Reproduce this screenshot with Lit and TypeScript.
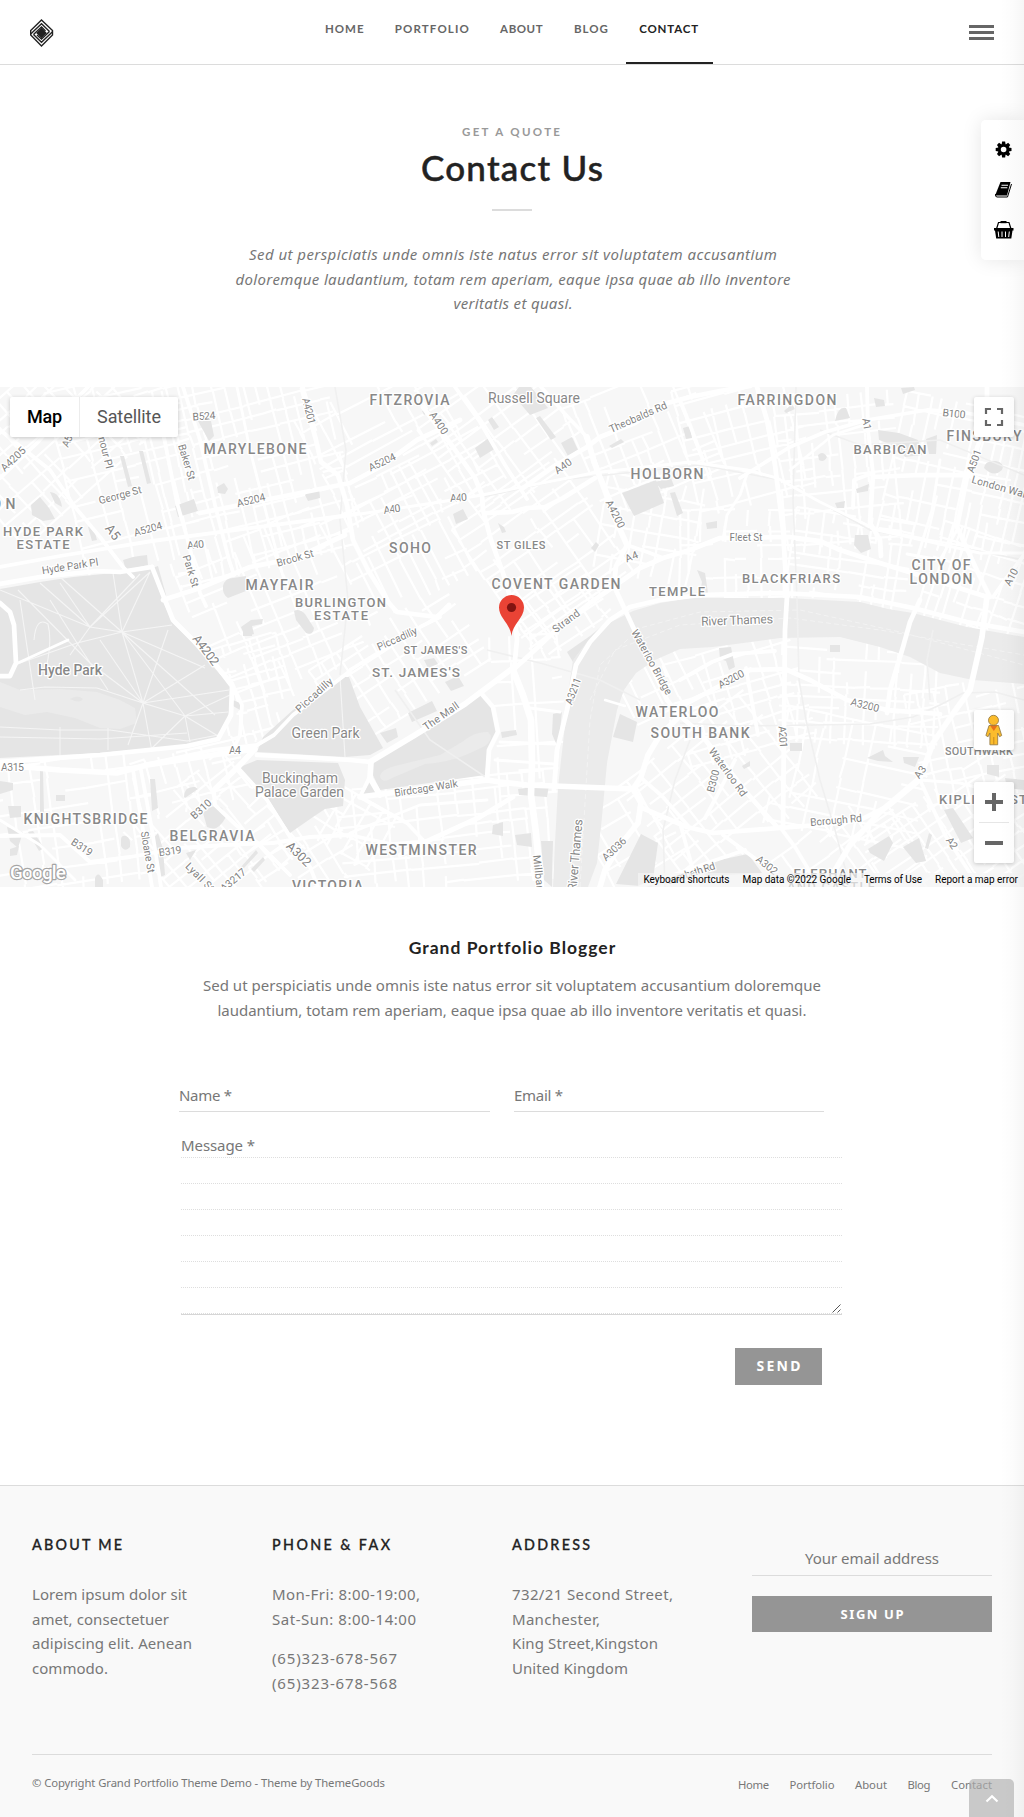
import { LitElement, html, svg, css } from "lit";
import { customElement, property } from "lit/decorators.js";

/** One line of text whose tracking is adjusted so that it spans a given width. */
@customElement("fit-line")
export class FitLine extends LitElement {
  @property({ type: Number }) w = 0;

  static styles = css`
    :host { display: inline-block; white-space: nowrap; text-align: left; }
    .run { display: inline-block; }
  `;

  firstUpdated() {
    const run = this.renderRoot.querySelector(".run") as HTMLElement;
    const count = (this.textContent || "").trim().length;
    run.style.letterSpacing = "0px";
    const natural = run.getBoundingClientRect().width;
    if (this.w > 0 && count > 1 && natural > 0) {
      const gap = (this.w - natural) / (count - 1);
      run.style.letterSpacing = `${gap}px`;
      run.style.marginRight = `${-gap}px`;
    }
  }

  render() {
    return html`<span class="run"><slot></slot></span>`;
  }
}

type Label = [string, number, number, number, number, number, string?];

/* text, centre x, centre y, width, size, rotation, style */
const LABELS: Label[] = [
  ["FITZROVIA", 409.5, 400, 80, 14, 0, "area"],
  ["Russell Square", 534, 398, 92, 14, 0, "park"],
  ["FARRINGDON", 787, 400, 99, 14, 0, "area"],
  ["MARYLEBONE", 255, 449, 103, 14, 0, "area"],
  ["BARBICAN", 890, 449, 73, 13, 0, "area"],
  ["FINSBURY", 984, 436, 75, 14, 0, "area"],
  ["HOLBORN", 667, 474, 73, 14, 0, "area"],
  ["ON", 3.5, 504, 24, 14, 0, "area"],
  ["HYDE PARK", 43, 531, 80, 13, 0, "area"],
  ["ESTATE", 43, 544, 53, 13, 0, "area"],
  ["SOHO", 410, 548, 42, 14, 0, "area"],
  ["ST GILES", 521, 545, 49, 11, 0, "area"],
  ["COVENT GARDEN", 556, 584, 129, 14, 0, "area"],
  ["TEMPLE", 677, 591, 56, 13, 0, "area"],
  ["BLACKFRIARS", 791, 578, 98, 13, 0, "area"],
  ["CITY OF", 941, 565, 59, 14, 0, "area"],
  ["LONDON", 941, 579, 63, 14, 0, "area"],
  ["MAYFAIR", 279.5, 585, 68, 14, 0, "area"],
  ["BURLINGTON", 340.5, 602, 91, 13, 0, "area"],
  ["ESTATE", 341, 615, 54, 13, 0, "area"],
  ["Hyde Park", 70, 670, 64, 14, 0, "area"],
  ["ST JAMES'S", 435.5, 650, 64, 11, 0, "area"],
  ["ST. JAMES'S", 416, 672, 88, 13.5, 0, "area"],
  ["Green Park", 325.5, 733, 68, 14, 0, "park"],
  ["Buckingham", 300, 778, 76, 14, 0, "park"],
  ["Palace Garden", 299.5, 792, 89, 14, 0, "park"],
  ["KNIGHTSBRIDGE", 85.5, 819, 124, 14, 0, "area"],
  ["BELGRAVIA", 212, 836, 85, 14, 0, "area"],
  ["WESTMINSTER", 421, 850, 111, 14, 0, "area"],
  ["VICTORIA", 327.5, 886, 71, 14, 0, "area"],
  ["WATERLOO", 677, 712, 83, 14, 0, "area"],
  ["SOUTH BANK", 700, 733, 99, 14, 0, "area"],
  ["SOUTHWARK", 979, 751, 68, 11, 0, "area"],
  ["KIPLING EST", 983, 799, 88, 13, 0, "area"],
  ["ELEPHANT", 830, 873, 73, 13, 0, "area"],
  ["AND CASTLE", 831, 886, 88, 13, 0, "area"],
  ["B524", 204, 416, 23, 10.5, -4],
  ["A4201", 309, 411, 27, 10.5, 75],
  ["Baker St", 187, 462, 37, 10.5, 73],
  ["A4205", 13, 459, 30, 10.5, -44],
  ["A5", 67, 441, 12, 10.5, -66],
  ["Seymour Pl", 103.5, 443, 52, 10.5, 76],
  ["George St", 120, 495, 44, 10.5, -15],
  ["A5204", 251, 500, 29, 10.5, -14],
  ["A5204", 148, 529, 29, 10.5, -16],
  ["A5", 113, 532, 16, 13, 52],
  ["A40", 195.5, 544.5, 17, 10.5, -6],
  ["Park St", 191, 571, 33, 10.5, 73],
  ["Hyde Park Pl", 70, 566, 57, 10.5, -9],
  ["Brook St", 295, 558, 38, 10.5, -16],
  ["A400", 439, 423, 25, 10.5, 56],
  ["Theobalds Rd", 638, 417, 62, 10.5, -24],
  ["A5204", 382, 462, 29, 10.5, -25],
  ["A40", 563, 466, 19, 10.5, -36],
  ["A40", 392, 509, 17, 10.5, -8],
  ["A40", 458.5, 497.5, 17, 10.5, -4],
  ["A4200", 615.5, 514, 30, 10.5, 63],
  ["A4", 631.5, 556.5, 13, 10.5, -22],
  ["Strand", 566, 621, 31, 10.5, -37],
  ["Piccadilly", 397, 638.5, 43, 10.5, -24],
  ["Piccadilly", 314, 695, 46, 10.5, -42],
  ["A1", 867, 424, 12, 10.5, 80],
  ["B100", 954, 413.5, 23, 10.5, 6],
  ["A501", 974, 461, 24, 10.5, -70],
  ["London Wall", 1000, 487, 58, 10.5, 16],
  ["Fleet St", 746, 537, 33, 10.5, 0],
  ["A10", 1011, 577, 18, 10.5, -62],
  ["River Thames", 737, 620, 72, 12.5, -2, "park"],
  ["A4202", 206, 650, 35, 12.5, 53],
  ["A4", 235, 750, 12, 10.5, 0],
  ["A315", 12.5, 767, 23, 10.5, 0],
  ["B310", 201, 809, 24, 10.5, -42],
  ["B319", 82, 847, 23, 10.5, 33],
  ["B319", 170, 851, 23, 10.5, -8],
  ["Sloane St", 148, 852, 42, 10.5, 80],
  ["Lyall St", 200, 877, 36, 10.5, 45],
  ["A3217", 233, 880, 30, 10.5, -40],
  ["A302", 299, 854, 29, 12.5, 44],
  ["The Mall", 441, 716, 41, 10.5, -35],
  ["Birdcage Walk", 426, 788, 64, 10.5, -9],
  ["A3211", 573, 691, 28, 10.5, -70],
  ["Waterloo Bridge", 652, 662, 73, 10.5, 61],
  ["Millbank", 539, 876, 42, 10.5, 84],
  ["River Thames", 575, 855, 72, 12.5, -85, "park"],
  ["A3036", 614, 849, 29, 10.5, -43],
  ["A3200", 731, 679, 28, 10.5, -28],
  ["A3200", 865, 705, 29, 10.5, 14],
  ["A201", 783, 737, 22, 10.5, 86],
  ["Waterloo Rd", 728, 772, 57, 10.5, 54],
  ["B300", 713, 781, 23, 10.5, -75],
  ["A3", 920, 772, 13, 10.5, -55],
  ["Borough Rd", 836, 820, 52, 10.5, -5],
  ["A2", 952, 843, 12, 10.5, 55],
  ["A302", 767, 865, 24, 10.5, 38],
  ["Lambeth Rd", 691, 873, 50, 10.5, -18],
];

const GREENS = [
  "M0 589 L40 582 L73 577 L113 573 L152 568 L157 583 L163 602 L173 623 L190 640 L207 660 L230 685 L230 703 L228 718 L217 738 L187 745 L100 753 L0 758 Z",
  "M342 677 L349 677 L360 707 L383 748 L370 755 L345 757 L257 752 L263 737 L293 710 Z",
  "M240 767 L257 760 L338 763 L345 780 L343 806 L325 809 L313 817 L290 833 L267 797 Z",
  "M373 762 L425 728 L480 693 L492 707 L497 730 L488 750 L485 775 L380 790 L372 773 Z",
  "M370 782 L378 793 L363 794 Z",
  "M198 421 L211 421 L214 436 L209 441 Z",
  "M120 456 L124 456 L132 486 L128 487 Z", "M139 451 L143 451 L151 483 L147 484 Z",
  "M175 506 L194 499 L198 511 L178 517 Z",
  "M217 487 L224 483 L228 489 L225 494 L218 493 Z",
  "M88 527 L93 526 L97 540 L92 541 Z",
  "M31 505 L40 497 L49 508 L55 519 L43 521 L32 515 Z", "M50 492 Q60 493 62 507 L55 503 Z",
  "M123 560 L133 557 L139 556 L147 555 L148 565 L126 570 Z",
  "M223 586 Q225 578 233 578 L246 576 L246 591 L228 598 Q222 594 223 586 Z",
  "M294 611 Q299 608 305 614 L314 628 Q313 636 306 633 L296 620 Z",
  "M241 627 L251 620 L263 619 L262 624 L252 626 L254 634 L245 636 Z",
  "M152 568 L158 566 L166 595 L163 601 L156 580 Z",
  "M311 488 L319 488 L320 498 L308 501 L305 495 Z",
  "M475 448 L490 437 L496 448 L480 458 Z", "M453 514 L463 509 L468 519 L456 524 Z",
  "M422 411 L428 409 L430 412 L424 415 Z", "M488 420 L492 417 L499 427 L494 430 Z",
  "M519 387 L531 387 L548 408 L530 415 L513 395 Z",
  "M430 443 L436 439 L438 442 L432 446 Z", "M536 418 L540 416 L556 437 L551 440 Z",
  "M561 443 L572 437 L578 450 L568 456 Z", "M609 446 L621 439 L624 442 L612 448 Z",
  "M622 493 L656 480 L664 503 L634 516 Z", "M655 482 L671 478 L674 486 L661 489 Z",
  "M670 493 L675 492 L683 513 L677 516 Z", "M683 428 L690 426 L692 438 L686 439 Z",
  "M498 523 L504 527 L506 532 L502 533 Z", "M591 548 L596 542 L599 545 L595 552 Z",
  "M567 652 L590 636 L607 622 L600 632 L578 654 L573 662 Z",
  "M835 421 Q838 406 846 408 L850 418 Z",
  "M874 398 L884 400 L885 406 L876 407 Z", "M901 388 L914 387 L915 390 L903 394 Z",
  "M878 430 L899 433 L918 440 L922 455 L905 457 L898 447 L879 440 Z",
  "M926 439 L937 435 L936 454 L929 454 Z", "M984 468 Q985 460 996 461 Q1005 463 1002 470 Q994 478 984 468 Z",
  "M856 489 L869 484 L868 491 L857 493 Z", "M835 503 L845 501 L844 508 L837 508 Z",
  "M855 535 L868 535 L871 549 L861 553 L854 545 Z", "M706 523 L717 521 L717 528 L707 529 Z",
  "M697 570 L705 573 L708 593 L700 593 L702 582 Z",
  "M818 455 Q823 450 827 457 Q824 463 819 460 Z", "M784 411 L792 404 L795 409 L786 413 Z",
  "M719 648 L731 647 L735 667 L729 670 L726 661 L720 659 Z",
  "M830 645 L840 645 L840 652 L830 652 Z", "M867 758 L883 750 L885 756 L893 762 L878 761 Z",
  "M903 757 L919 757 L915 767 L904 763 Z", "M790 743 L802 743 L802 751 L790 751 Z",
  "M742 766 L750 761 L750 766 L744 769 Z", "M944 810 L953 808 L973 838 L961 843 Z",
  "M868 849 L889 836 L893 843 L884 861 L870 853 Z", "M903 847 L919 838 L926 861 L916 863 Z",
  "M710 862 L748 854 L762 873 L705 876 Z", "M925 848 L929 833 L932 835 L928 849 Z",
  "M641 834 L658 843 L652 887 L616 884 Z", "M620 714 L637 722 L633 742 L613 737 Z",
  "M553 714 L562 712 L558 748 L552 734 Z", "M541 841 L553 841 L552 887 L544 880 Z",
  "M518 789 L549 785 L547 797 L519 795 Z", "M515 835 L531 833 L532 847 L517 845 Z",
  "M493 825 L503 822 L503 836 L492 834 Z", "M445 682 L458 676 L464 686 L451 691 Z",
  "M408 713 L432 701 L437 711 L412 722 Z", "M380 733 L396 728 L398 737 L387 743 Z",
  "M424 660 L434 658 L438 664 L428 668 Z", "M501 732 L516 730 L517 735 L502 738 Z",
  "M203 813 Q214 802 222 808 L226 817 Q220 828 213 829 L207 827 Z",
  "M184 797 Q184 786 195 787 L198 789 L185 798 Z", "M150 779 L155 779 L158 808 L152 811 Z",
  "M121 840 Q121 835 126 836 Q131 838 130 847 Q125 853 121 846 Z",
  "M28 832 L33 831 L44 848 L39 851 Z", "M8 806 L21 806 L21 817 L10 818 Z",
  "M7 827 L23 832 L18 848 L10 841 Z", "M0 781 L13 783 L13 790 L0 794 Z",
  "M10 849 L19 846 L17 855 L10 856 Z", "M152 840 L158 833 L163 849 L165 875 L158 878 Z",
  "M186 853 L196 850 L190 860 Z", "M241 867 L256 850 L258 853 L244 868 Z",
  "M251 869 L263 857 L265 860 L254 872 Z", "M56 795 L65 795 L65 801 L56 801 Z",
  "M95 878 Q98 870 103 880 L103 887 L95 887 Z", "M233 700 L240 703 L240 710 L233 706 Z",
  "M987 765 L999 765 L999 777 L987 774 Z", "M1005 778 L1024 780 L1024 790 L1007 788 Z",
  "M243 630 L252 630 L252 636 L243 636 Z", "M40 771 L43 771 L44 813 L40 813 Z",
];

const RIVER =
  "M553 887 L555 843 L558 787 L563 743 L570 680 L573 660 L586 643 L607 624 L633 611 L660 603 L690 598 L787 598 L860 602 L888 609 L913 613 L967 627 L1024 637 " +
  "L1024 684 L973 680 L940 673 L910 657 L880 647 L840 637 L780 638 L713 647 L680 649 L655 660 L636 673 L624 690 L617 710 L607 763 L602 817 L597 863 L588 887 Z";

/* width, path */
const ROADS: [number, string][] = [
  [5, "M0 584 L40 577 L97 571 L120 572 L152 567"], [4, "M0 567 L60 556 L152 541 L350 515"],
  [3, "M340 517 L440 502 L482 495 L593 473 L690 462 L747 470 L777 478 L820 502 L877 530 L980 553 L1024 553"],
  [5, "M487 513 L512 512 L527 508 L545 507 L563 498 L595 478"], [5, "M200 513 L280 497 L350 483 L380 467 L417 440 L460 420"],
  [4, "M0 478 L38 442 L70 405 L88 387"], [4, "M0 430 L50 470 L75 507 L100 537 L123 567 L133 577"],
  [5, "M152 567 L165 600 L173 620 L190 637 L212 660 L232 686 L231 715 L218 739 L187 746 L100 755 L0 762"],
  [4, "M212 660 L232 683 L242 705 L240 735 L232 752"],
  [5, "M163 600 L200 588 L250 567 L296 558 L345 535"], [4, "M163 432 L177 503 L187 537 L200 593 L206 606"],
  [4, "M183 387 L200 440 L215 505 L229 560 L234 575"], [3, "M237 387 L250 450 L268 520 L284 580"],
  [5, "M302 389 L316 440 L321 462 L338 475 L347 505 L353 540 L368 570 L388 602 L397 612 L437 617 L449 605"],
  [5, "M423 407 L453 447 L475 478 L482 495 L483 510 L491 540 L503 573 L514 610 L517 640 L514 670"],
  [4, "M455 387 L480 422 L505 465 L527 499"], [4, "M541 387 L566 415 L587 437 L597 467"],
  [6, "M587 437 L594 462 L604 488 L617 523 L627 545"], [5, "M627 545 L616 566 L614 586 L633 627 L667 700 L680 716"],
  [5, "M523 488 L553 467 L587 447 L600 437 L635 423 L660 405 L690 397 L720 391 L750 386"],
  [5, "M513 670 L537 648 L556 630 L590 603 L616 585 L640 568 L663 558 L690 550 L720 538 L790 537 L820 541 L840 550 L880 563 L925 577 L987 597"],
  [4, "M627 545 L650 553 L663 558"], [7, "M513 670 L523 695 L531 720 L532 763 L531 795 L536 833 L541 887"],
  [5, "M554 790 L557 750 L567 710 L576 665 L590 642 L610 620 L630 607 L660 600 L700 595 L780 593 L860 597 L913 608 L967 622 L1024 632"],
  [5, "M757 387 L767 420 L775 465 L783 530 L787 597 L785 630 L783 827"], [5, "M920 600 L910 622 L903 647 L890 690 L887 713"],
  [6, "M987 596 L982 637 L970 690 L952 715 L933 743 L920 778 L880 812 L850 845 L825 887"],
  [5, "M680 707 L725 683 L750 670 L785 669 L810 680 L847 700 L887 710 L940 714"], [4, "M680 680 L712 662 L733 654 L775 651"],
  [5, "M640 807 L687 827 L713 833 L780 828 L830 824 L860 820 L890 805 L920 780"], [4, "M780 827 L795 847 L813 877 L820 887"],
  [4, "M867 387 L868 430 L873 473 L854 480 L853 508"], [5, "M873 473 L870 523 L880 540 L881 556"],
  [5, "M873 477 L920 475 L967 475 L1024 495"], [4, "M740 478 L790 447 L825 432 L867 420 L927 410 L967 413 L1024 425"],
  [5, "M987 387 L987 420 L967 477 L957 527 L980 577 L990 597"], [4, "M680 400 L690 425 L703 460"],
  [3, "M747 474 L740 495 L727 515 L723 540"], [3, "M790 470 L833 435 L870 423"],
  [4, "M1024 555 L1005 580 L993 597"], [3, "M907 554 L940 560 L957 530"], [3, "M940 460 L932 510 L912 575"],
  [6, "M360 797 L420 789 L487 780 L500 782 L527 785 L633 789"], [6, "M633 789 L641 777 L648 755 L660 735 L680 716"],
  [6, "M633 789 L641 803 L638 823 L620 845 L605 870 L600 887"], [4, "M640 777 L662 796 L690 828"],
  [5, "M673 710 L700 733 L725 765 L747 793 L777 827"], [4, "M746 668 L752 702 L758 735"],
  [6, "M370 762 L415 735 L465 704 L513 668"], [5, "M257 755 L300 757 L350 760 L371 762"], [6, "M371 762 L370 778 L380 795"],
  [4, "M370 776 L360 797"], [4, "M350 670 L420 627 L440 617"], [4, "M147 764 L213 750 L257 745 L274 735 L293 715 L350 671"],
  [5, "M481 693 L493 707 L498 732 L489 750 L487 780"], [4, "M237 767 L267 800 L290 837 L310 867 L318 887"],
  [6, "M0 765 L60 770 L117 773 L147 765 L213 755 L255 749 L238 767 L214 790"],
  [4, "M133 770 L143 830 L152 887"], [4, "M141 770 L152 830 L161 887"], [4, "M273 843 L310 837 L350 835 L395 845 L423 843"],
  [4, "M360 797 L385 811 L407 823 L423 840"], [5, "M400 855 L423 843 L480 817 L513 797"],
  [4, "M214 790 L215 805 L236 825 L260 845 L290 875"], [4, "M0 836 L60 835 L90 862 L130 857 L180 848 L225 845 L273 843"],
  [3, "M0 820 L40 845 L75 880"], [4, "M920 780 L945 835 L970 873 L980 887"], [3, "M920 780 L960 783 L1024 800"],
  [4, "M680 823 L693 870 L698 887"], [4, "M723 835 L780 877 L787 887"], [4, "M640 887 L710 862 L745 850"],
  [4, "M705 818 L720 790 L735 760"], [5, "M0 603 L10 612 L14 625 L16 663 L10 676 L0 676"],
  [3, "M18 663 L68 640"], [3, "M350 833 L420 805 L487 800"], [3, "M530 708 L560 712"],
  [3, "M500 742 L555 744"], [3, "M495 760 L554 764"], [2.5, "M605 700 L625 706"],
];

const RAILS = [
  "M487 650 L540 663 L600 680 L640 700", "M680 723 L740 726 L813 725 L870 724 L913 717 L940 705 L963 693 L995 692 L1024 700",
  "M796 387 L793 500 L797 600 L799 680 L806 720 L820 780 L835 830 L850 887", "M933 630 L927 660 L930 700",
  "M665 887 L663 830 L675 780 L690 740", "M335 387 L346 450 L340 520 L348 600 L340 675", "M483 497 L560 480 L700 465 L780 480 L870 530 L1024 560",
  "M395 690 L430 740 L490 780", "M820 430 L860 445 L940 440 L1024 475",
];

const PARK_PATHS =
  "M0 590 L90 627 L122 632 L143 703 L185 716 L230 695 M18 590 L90 663 L143 703 M60 583 L90 627 L70 655 M122 632 L113 573 M122 632 L77 643 L20 663 M122 632 L185 716 M122 632 L150 572 M90 627 L150 572 M90 627 L40 583 M90 627 L140 574 M122 632 L205 668 M122 632 L215 715 M122 632 L60 577 M122 632 L172 625 M143 703 L168 630 M143 703 L205 665 M143 703 L229 690 M143 703 L128 745 M143 703 L100 640 M185 716 L190 742 M185 716 L228 712 M185 716 L218 736 M185 716 L150 750 M77 643 L108 690 M77 643 L50 600 M20 690 L45 687 L97 688 L143 703 M0 727 L60 730 L110 730 L187 741 L218 735 M0 737 L100 739 L187 733 M20 600 L35 700 M34 640 Q36 616 48 624 Q52 640 47 664 M143 703 L152 752 M60 727 L60 755 M108 728 L108 750 M340 677 L345 757";

/** Deterministic pseudo random source, so the street plan is stable. */
const random = (seed: number) => () => {
  seed = (seed * 16807) % 2147483647;
  return seed / 2147483647;
};

/* centre x, centre y, width, height, rotation, spacing u, spacing v */
const DISTRICTS: number[][] = [
  [50, 440, 180, 130, -42, 17, 12], [130, 470, 130, 190, -14, 24, 13], [250, 470, 190, 200, -14, 15, 13],
  [400, 450, 160, 150, -28, 20, 12], [395, 540, 120, 130, -27, 12, 17], [270, 610, 150, 160, -22, 19, 13],
  [255, 690, 70, 100, -15, 11, 11], [505, 440, 130, 120, -36, 24, 14], [545, 550, 130, 140, -35, 17, 12],
  [645, 440, 130, 120, -22, 15, 14], [650, 530, 100, 100, 10, 15, 16], [745, 440, 120, 130, -14, 17, 13],
  [740, 560, 120, 100, 0, 11, 16], [840, 470, 120, 150, -6, 15, 15], [850, 560, 120, 90, 8, 12, 11],
  [965, 480, 150, 150, 12, 12, 16], [980, 590, 110, 110, 18, 9, 15], [400, 665, 160, 90, -33, 16, 12],
  [530, 720, 70, 170, -4, 20, 24], [445, 835, 210, 110, -6, 17, 12], [300, 855, 100, 90, -32, 18, 14],
  [60, 825, 190, 130, -8, 21, 17], [215, 840, 130, 130, -40, 14, 12], [190, 780, 110, 60, -14, 16, 14],
  [350, 825, 80, 60, 30, 15, 13], [660, 680, 80, 90, -26, 15, 17], [740, 700, 130, 110, -16, 17, 13],
  [860, 690, 160, 110, 3, 15, 12], [980, 740, 130, 120, -12, 14, 14], [720, 790, 160, 130, -38, 16, 15],
  [850, 780, 150, 120, 12, 21, 15], [960, 850, 160, 130, -34, 14, 13], [850, 860, 130, 90, -36, 17, 13],
  [640, 850, 80, 110, -30, 17, 15], [560, 615, 90, 60, -35, 13, 12],
];

const minorStreets = () => {
  let d = "";
  DISTRICTS.forEach(([cx, cy, w, h, rot, su, sv], index) => {
    const next = random(index * 977 + 131);
    const a = (rot * Math.PI) / 180;
    const at = (u: number, v: number) =>
      `${(cx + u * Math.cos(a) - v * Math.sin(a)).toFixed(1)} ${(cy + u * Math.sin(a) + v * Math.cos(a)).toFixed(1)}`;
    for (let u = -w / 2; u <= w / 2; u += su * (0.7 + next() * 0.6)) {
      let v = -h / 2;
      while (v < h / 2) {
        const end = Math.min(h / 2, v + sv * (1 + Math.floor(next() * 4)));
        if (next() > 0.3) d += `M${at(u, v)}L${at(u + next() * 3 - 1.5, end)}`;
        v = end;
      }
    }
    for (let v = -h / 2; v <= h / 2; v += sv * (0.8 + next() * 0.6)) {
      let u = -w / 2;
      while (u < w / 2) {
        const end = Math.min(w / 2, u + su * (1 + Math.floor(next() * 4)));
        if (next() > 0.3) d += `M${at(u, v)}L${at(end, v + next() * 3 - 1.5)}`;
        u = end;
      }
    }
  });
  return d;
};

@customElement("london-map")
export class LondonMap extends LitElement {
  static styles = css`
    :host { display: block; position: relative; height: 500px; overflow: hidden; font-family: Roboto, "Liberation Sans", sans-serif; }
    .canvas { display: block; width: 1024px; height: 500px; }
    .land { fill: #f7f7f7; }
    .minor { fill: none; stroke: #fff; stroke-width: 2.2; }
    .green { fill: #e5e5e5; }
    .water { fill: #ebebeb; }
    .ferry { fill: none; stroke: #f3f3f3; stroke-width: 1; stroke-dasharray: 5 3; }
    .paths { fill: none; stroke: #f5f5f5; stroke-width: 1.1; }
    .road { fill: none; stroke: #fff; stroke-linejoin: round; stroke-linecap: round; }
    .rail { fill: none; stroke: #f0f0f0; stroke-width: 1.6; }
    .label { fill: #828282; stroke: #fff; stroke-width: 2.5px; stroke-linejoin: round; paint-order: stroke; text-anchor: middle; }
    .area { fill: #888; font-weight: 500; }
    .park { fill: #888; }
    .brand { fill: #fff; stroke: #a6a6a6; stroke-width: 2.4px; paint-order: stroke; font-weight: 500; font-size: 19px; stroke-linejoin: round; }
    .box { position: absolute; background: #fff; border-radius: 2px; box-shadow: 0 1px 4px rgba(0, 0, 0, 0.2); }
    .types { left: 10px; top: 10px; height: 40px; display: flex; font-size: 18px; line-height: 40px; color: #565656; }
    .type { width: 98px; text-align: center; }
    .type.on { width: 69px; color: #000; font-weight: 500; border-right: 1px solid #ececec; }
    .full { left: 974px; top: 10px; width: 40px; height: 40px; }
    .man { left: 974px; top: 323px; width: 40px; height: 40px; }
    .zoom { left: 974px; top: 395px; width: 40px; height: 81px; }
    .icon { display: block; }
    .legal { position: absolute; right: 0; bottom: 0; height: 14px; padding: 0 6px 0 6px; display: flex; gap: 13px; font-size: 10px; line-height: 13.5px; color: #000; background: rgba(245, 245, 245, 0.7); }
  `;

  render() {
    return html`
      <svg class="canvas" viewBox="0 387 1024 500">
        <rect class="land" x="0" y="387" width="1024" height="500" />
        <path class="minor" d=${minorStreets()} />
        ${GREENS.map((d) => svg`<path class="green" d=${d} />`)}
        <path class="water" d="M0 682 L20 690 L60 689 L97 692 L120 700 L135 708 L137 723 L120 729 L100 728 L75 718 L47 712 L25 715 L0 707 Z" />
        <path class="green" d="M70 699 Q78 694 83 699 Q80 704 70 699 Z" />
        <path class="water" d="M380 777 Q380 770 395 766 L440 755 L462 742 Q475 731 488 732 Q495 738 485 746 L468 754 Q450 762 425 764 L392 778 Q383 784 380 777 Z" />
        <path class="paths" d=${PARK_PATHS} />
        <path class="water" d=${RIVER} />
        <path class="ferry" d="M580 887 L590 720 L600 665 L640 628 L700 612 L800 610 L900 632 L1024 665 M590 700 L615 650 L680 625 L790 618 L880 630 L1024 655" />
        ${RAILS.map((d) => svg`<path class="rail" d=${d} />`)}
        ${ROADS.map(([w, d]) => svg`<path class="road" stroke-width=${w * 0.95} d=${d} />`)}
        ${LABELS.map(
          ([text, x, y, w, size, rot, kind]) => svg`<text class="label ${kind || "street"}" font-size=${size}
            transform="translate(${x} ${y}) rotate(${rot})" y=${size * 0.355} textLength=${w}>${text}</text>`,
        )}
        <text class="brand" x="10" y="879" textLength="56">Google</text>
        <path fill="#ea4335" d="M511.500 636 C510.500 624 499 618 499 607.500 A12.500 12.500 0 0 1 524 607.500 C524 618 512.500 624 511.500 636 Z" />
        <circle cx="511.500" cy="607.500" r="4.600" fill="#811411" />
      </svg>
      <div class="box types"><span class="type on"><fit-line w="35">Map</fit-line></span><span class="type"><fit-line w="64">Satellite</fit-line></span></div>
      <div class="box full">
        <svg class="icon" width="40" height="40"><path fill="none" stroke="#666" stroke-width="2.200" d="M12 17v-5h5M23 12h5v5M28 23v5h-5M17 28h-5v-5" /></svg>
      </div>
      <div class="box man">
        <svg class="icon" width="40" height="40">
          <path fill="#fbbc2c" stroke="#8d7440" stroke-width=".8" d="M15 15.500 h9.500 l3.200 10 -2.200 1.200 -1.800 -3.600 v11.700 h-7.800 v-11.700 l-1.800 3.600 -2.200 -1.200 Z" />
          <path fill="#e8711c" d="M16 15.500h7.500l-3.700 5.500Z" />
          <path stroke="#c98a1e" stroke-width="1" d="M19.800 27v7.500" />
          <circle cx="19.500" cy="10.300" r="5" fill="#fbbc2c" stroke="#8d7440" stroke-width=".8" />
        </svg>
      </div>
      <div class="box zoom">
        <svg class="icon" width="40" height="81"><path stroke="#666" stroke-width="4" d="M11 20h18M20 11v18M11 61h18" /><path stroke="#e6e6e6" d="M5 40.500h30" /></svg>
      </div>
      <div class="legal">
        <fit-line w="86">Keyboard shortcuts</fit-line><fit-line w="108.500">Map data ©2022 Google</fit-line><fit-line w="58">Terms of Use</fit-line><fit-line w="83">Report a map error</fit-line>
      </div>
    `;
  }
}

@customElement("app-root")
export class AppRoot extends LitElement {
  static styles = css`
    :host { display: block; position: relative; width: 1024px; height: 1817px; overflow: hidden; background: #fff; color: #777; font: 15px/24.5px "Noto Sans", "Open Sans", sans-serif; }
    .head { height: 64px; border-bottom: 1px solid #dcdcdc; display: grid; grid-template-columns: 313px 1fr 81px; align-items: start; }
    .logo { display: block; margin: 19px 0 0 30px; }
    .nav { display: flex; height: 64px; font: 700 11.5px/58px Lato, "Open Sans", sans-serif; color: #666; padding-left: 12px; gap: 31.300px; }
    .nav .on { color: #222; height: 62px; border-bottom: 2px solid #222; margin-left: -13px; padding: 0 15px 0 13px; }
    .burger { margin-top: 25px; width: 25px; display: grid; gap: 3px; margin-left: 26px; }
    .bar { height: 3px; background: #666; }
    .hero { height: 267px; padding-top: 55px; text-align: center; display: flex; flex-direction: column; align-items: center; }
    .eyebrow { font: 700 11.5px/24px Lato, sans-serif; color: #999; height: 24px; margin-left: -2px; }
    .title { font: 500 35px/46px Lato, sans-serif; height: 46px; color: #222; margin: 0; -webkit-text-stroke: 0.5px #222; }
    .rule { width: 40px; height: 2px; background: #dcdcdc; margin: 19px 0 31px; }
    .lead { display: flex; flex-direction: column; align-items: center; }
    .hero .lead { font-style: italic; margin-left: 2px; }
    .contact { height: 557px; padding: 41px 179px 0; display: flex; flex-direction: column; }
    .subtitle { font: 700 17.5px/40px Lato, sans-serif; color: #222; margin: 0; text-align: center; }
    .contact .lead { margin-top: 5px; }
    .fields { display: grid; grid-template-columns: 311px 310px; gap: 24px; margin-top: 60px; }
    .field { height: 29px; border-bottom: 1px solid #dcdcdc; line-height: 26px; }
    .area { position: relative; margin: 19px 0 0 2px; width: 661px; height: 184px; border-bottom: 1px solid #d6d6d6; line-height: 28px; box-sizing: border-box; background: repeating-linear-gradient(90deg, #dedede 0 1px, transparent 1px 2px) 0 0 / 100% 100%; }
    .sheet { position: absolute; inset: 0; background: repeating-linear-gradient(#fff 0 25px, transparent 25px 26px) 0 1px; }
    .ink { position: relative; }
    .grip { position: absolute; right: 0; bottom: 0; }
    .send { align-self: flex-end; margin: 33px 23px 0 0; width: 87px; height: 37px; background: #959595; color: #fff; text-align: center; font-weight: 700; font-size: 14px; line-height: 36px; }
    .foot { height: 331px; border-top: 1px solid #dcdcdc; background: #f9f9f9; padding: 0 32px; }
    .cols { display: grid; grid-template-columns: repeat(4, 240px); height: 268px; }
    .col { display: flex; flex-direction: column; align-items: flex-start; padding-top: 45px; }
    .caption { font: 500 14.3px/28px Lato, sans-serif; color: #222; margin: 0 0 23px; -webkit-text-stroke: 0.3px #222; }
    .space { height: 15px; }
    .signup { padding-top: 60px; align-items: stretch; text-align: center; }
    .mail { height: 29px; border-bottom: 1px solid #dcdcdc; line-height: 24px; }
    .join { margin-top: 20px; height: 36px; background: #959595; color: #fff; font-weight: 700; font-size: 13px; line-height: 37px; }
    .base { border-top: 1px solid #dcdcdc; display: flex; justify-content: space-between; font-size: 11.3px; line-height: 18px; padding-top: 19px; }
    .links { display: flex; gap: 20.500px; padding-top: 2px; }
    .edge { position: absolute; top: 0; right: 0; width: 24px; height: 100%; background: linear-gradient(90deg, rgba(0, 0, 0, 0), rgba(0, 0, 0, 0.012) 50%, rgba(0, 0, 0, 0.035)); }
    .tools { position: absolute; top: 120px; right: 0; width: 43px; height: 140px; border-radius: 5px 0 0 5px; background: linear-gradient(90deg, #fff 40%, #f8f8f8); box-shadow: 0 0 20px rgba(0, 0, 0, 0.1); }
    .top { position: absolute; right: 10px; bottom: 0; width: 45px; height: 38px; border-radius: 5px 5px 0 0; background: rgba(175, 175, 175, 0.65); }
    .glyph { display: block; }
  `;

  private gear() {
    const teeth = Array.from({ length: 8 }, (_, i) => svg`<path d="M-2 -5 L-1.500 -7.900 H1.500 L2 -5 Z" transform="rotate(${i * 45})" />`);
    return svg`<g transform="translate(22.600 29.500)">${teeth}<circle r="4.300" fill="none" stroke="#000" stroke-width="3" /></g>`;
  }

  render() {
    return html`
      <header class="head">
        <svg class="logo" width="24" height="28" viewBox="0 0 24 28" fill="none" stroke="#222" stroke-width="1.400">
          <path d="M11.500 1 L22.500 11.500 V16 L11.500 27 L.7 16 V11.500 Z" />
          <path d="M.7 15 L11.500 4.700 L19.500 12.500" />
          <path d="M22.500 12.800 L11.500 23.300 L3.500 15.500" />
          <path d="M3.500 15.500 L11.500 8 L15.500 12 M19.500 12.500 L11.500 20 L7 16" />
          <path fill="#222" stroke="none" d="M11.500 8.800 L16.800 14 L11.500 19.200 L6.200 14 Z" />
        </svg>
        <nav class="nav">
          <fit-line w="38.500">HOME</fit-line><fit-line w="74">PORTFOLIO</fit-line><fit-line w="42.500">ABOUT</fit-line><fit-line w="34">BLOG</fit-line>
          <span class="on"><fit-line w="59">CONTACT</fit-line></span>
        </nav>
        <div class="burger"><div class="bar"></div><div class="bar"></div><div class="bar"></div></div>
      </header>

      <section class="hero">
        <div class="eyebrow"><fit-line w="98">GET A QUOTE</fit-line></div>
        <h1 class="title"><fit-line w="182">Contact Us</fit-line></h1>
        <div class="rule"></div>
        <div class="lead">
          <fit-line w="528">Sed ut perspiciatis unde omnis iste natus error sit voluptatem accusantium</fit-line>
          <fit-line w="555">doloremque laudantium, totam rem aperiam, eaque ipsa quae ab illo inventore</fit-line>
          <fit-line w="119">veritatis et quasi.</fit-line>
        </div>
      </section>

      <london-map></london-map>

      <section class="contact">
        <h2 class="subtitle"><fit-line w="206">Grand Portfolio Blogger</fit-line></h2>
        <div class="lead">
          <fit-line w="618">Sed ut perspiciatis unde omnis iste natus error sit voluptatem accusantium doloremque</fit-line>
          <fit-line w="589">laudantium, totam rem aperiam, eaque ipsa quae ab illo inventore veritatis et quasi.</fit-line>
        </div>
        <div class="fields">
          <div class="field"><fit-line w="53">Name *</fit-line></div>
          <div class="field"><fit-line w="49">Email *</fit-line></div>
        </div>
        <div class="area">
          <div class="sheet"></div>
          <span class="ink"><fit-line w="74">Message *</fit-line></span>
          <svg class="grip" width="11" height="11" stroke="#555" stroke-width="1"><path d="M1.500 9.500 L9.500 1.500 M6.500 9.500 L9.500 6.500" /></svg>
        </div>
        <div class="send"><fit-line w="44">SEND</fit-line></div>
      </section>

      <footer class="foot">
        <div class="cols">
          <div class="col">
            <h3 class="caption"><fit-line w="90">ABOUT ME</fit-line></h3>
            <fit-line w="155">Lorem ipsum dolor sit</fit-line><fit-line w="137">amet, consectetuer</fit-line>
            <fit-line w="160">adipiscing elit. Aenean</fit-line><fit-line w="76">commodo.</fit-line>
          </div>
          <div class="col">
            <h3 class="caption"><fit-line w="118">PHONE &amp; FAX</fit-line></h3>
            <fit-line w="148">Mon-Fri: 8:00-19:00,</fit-line><fit-line w="144">Sat-Sun: 8:00-14:00</fit-line>
            <div class="space"></div>
            <fit-line w="125">(65)323-678-567</fit-line><fit-line w="125">(65)323-678-568</fit-line>
          </div>
          <div class="col">
            <h3 class="caption"><fit-line w="78">ADDRESS</fit-line></h3>
            <fit-line w="161">732/21 Second Street,</fit-line><fit-line w="88">Manchester,</fit-line>
            <fit-line w="146">King Street,Kingston</fit-line><fit-line w="116">United Kingdom</fit-line>
          </div>
          <div class="col signup">
            <div class="mail"><fit-line w="134">Your email address</fit-line></div>
            <div class="join"><fit-line w="63">SIGN UP</fit-line></div>
          </div>
        </div>
        <div class="base">
          <fit-line w="353">© Copyright Grand Portfolio Theme Demo - Theme by ThemeGoods</fit-line>
          <div class="links">
            <fit-line w="31">Home</fit-line><fit-line w="45">Portfolio</fit-line><fit-line w="32">About</fit-line><fit-line w="23">Blog</fit-line><fit-line w="41">Contact</fit-line>
          </div>
        </div>
      </footer>

      <div class="edge"></div>
      <div class="tools">
        <svg class="glyph" width="43" height="140">
          ${this.gear()}
          <g>
            <path d="M19.500 62 H29.500 L26 75.500 H15 Q14.200 75.500 14.500 74.500 Z" />
            <path stroke="#fff" stroke-width="1.100" d="M20.500 65.200h6.500M19.800 67.800h6.500" />
            <path fill="none" stroke="#000" stroke-width="1" d="M14.600 74 Q14 77 16 77 H26.500 L30.500 64" />
          </g>
          <g>
            <path fill="none" stroke="#000" stroke-width="1.200" d="M15.500 109 L17.500 102.500 H28 L30 109" />
            <path d="M19.500 101h6v2.200h-6Z" />
            <path d="M13 108h19.500v2.400H31.500L30.300 118.500H15.200L14 110.400H13Z" />
            <path stroke="#fff" stroke-width="1" d="M17.200 111.500l.6 5.500M21 111.500v5.500M24.500 111.500v5.500M28.300 111.500l-.6 5.500" />
          </g>
        </svg>
      </div>
      <div class="top">
        <svg class="glyph" width="45" height="38" fill="none" stroke="#fff" stroke-width="2.200"><path d="M17.500 22.500 L23 17.200 L28.500 22.500" /></svg>
      </div>
    `;
  }
}
